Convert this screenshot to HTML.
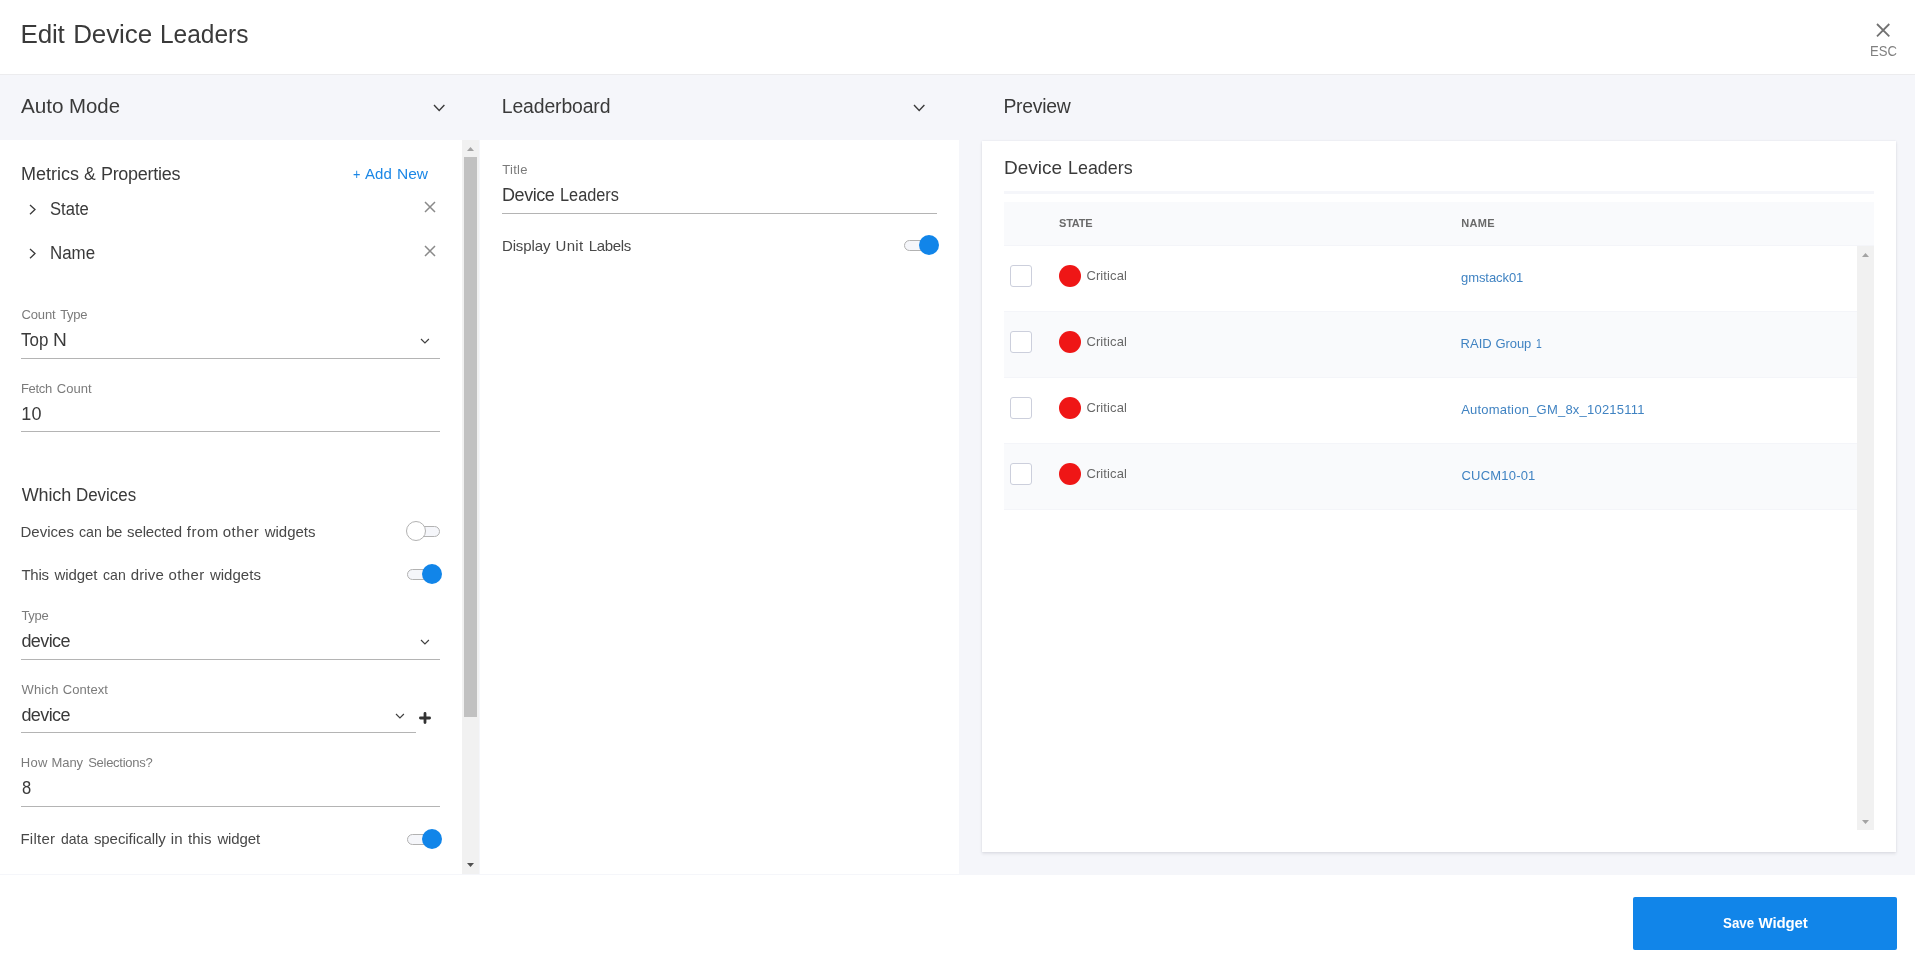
<!DOCTYPE html>
<html><head><meta charset="utf-8"><title>Edit Device Leaders</title>
<style>
*{box-sizing:border-box;margin:0;padding:0}
html,body{width:1915px;height:967px;overflow:hidden;background:#fff}
body{font-family:"Liberation Sans",sans-serif;position:relative}
#app{position:absolute;left:0;top:0;width:1915px;height:967px;will-change:transform}
.t{position:absolute;white-space:pre;display:block;transform-origin:0 50%}
.abs,.ic{position:absolute}
.ic{overflow:visible}
#hdr{position:absolute;left:0;top:0;width:1915px;height:74px;background:#fff}
#hline{position:absolute;left:0;top:74px;width:1915px;height:1px;background:#ececee}
#band{position:absolute;left:0;top:75px;width:1915px;height:800px;background:#f5f6fa}
#left{position:absolute;left:0;top:140px;width:462px;height:734px;background:#fff}
#lsb{position:absolute;left:462px;top:140px;width:17px;height:734px;background:#f1f1f1}
#lsb b{position:absolute;left:2px;top:17px;width:13px;height:560px;background:#c1c1c1}
#mid{position:absolute;left:480px;top:140px;width:479px;height:734px;background:#fff}
#card{position:absolute;left:982px;top:141px;width:914px;height:711px;background:#fff;box-shadow:0 2px 3px rgba(30,30,60,.09),0 0 2px rgba(30,30,60,.08)}
#foot{position:absolute;left:0;top:875px;width:1915px;height:92px;background:#fff}
.ul{position:absolute;height:1px;background:#b4b4b4}
.tg{position:absolute;width:33px;height:11px;border:1px solid #b2b2b2;border-radius:6px;background:#f5f6fa}
.tg i{position:absolute;left:-2px;top:-6px;width:20px;height:20px;border-radius:50%;background:#fff;border:1px solid #b2b2b2}
.tg.on i{left:14px;background:#1185e9;border:0}
#cdiv{position:absolute;left:1004px;top:191px;width:870px;height:3px;background:#f5f6fa}
#thead{position:absolute;left:1004px;top:202px;width:870px;height:44px;background:#f9fafc;border-bottom:1px solid #f4f5f9}
.row{position:absolute;left:1004px;width:853px;height:66px;border-top:1px solid #f4f5f9}
.row.alt{background:#f9fafc}
#rsb{position:absolute;left:1857px;top:246px;width:17px;height:584px;background:#f1f1f1}
.cb{position:absolute;left:1010px;width:22px;height:22px;border:1px solid #cccfdc;border-radius:3px;background:#fff}
.dot{position:absolute;left:1059px;width:22px;height:22px;border-radius:50%;background:#ef1616}
#save{position:absolute;left:1633px;top:897px;width:264px;height:53px;background:#1185e9;border-radius:2px}
</style></head>
<body>
<div id="app">
<div id="hdr"></div><div id="hline"></div><div id="band"></div>
<span class="t" style="left:20.60px;top:17.50px;font-size:26px;line-height:33px;color:#3a3a3a;letter-spacing:-0.226px">Edit</span>
<span class="t" style="left:73.20px;top:17.50px;font-size:26px;line-height:33px;color:#3a3a3a;letter-spacing:-0.103px">Device</span>
<span class="t" style="left:159.52px;top:17.50px;font-size:26px;line-height:33px;color:#3a3a3a;transform:scaleX(0.9417)">Leaders</span>
<span class="t" style="left:1869.53px;top:41.00px;font-size:15px;line-height:19px;color:#808080;transform:scaleX(0.8730)">ESC</span>
<svg class="ic" style="left:1874.75px;top:21.5px" width="16.3" height="16.3" viewBox="-2 -2 16.3 16.3"><path d="M0 0 L12.3 12.3 M12.3 0 L0 12.3" fill="none" stroke="#727272" stroke-width="1.8"/></svg>
<span class="t" style="left:21.30px;top:93.50px;font-size:19.4px;line-height:25px;color:#3a3a3a;transform:scaleX(1.0689)">Auto</span>
<span class="t" style="left:68.95px;top:93.50px;font-size:19.4px;line-height:25px;color:#3a3a3a;transform:scaleX(1.0509)">Mode</span>
<span class="t" style="left:501.80px;top:93.50px;font-size:19.4px;line-height:25px;color:#3a3a3a;letter-spacing:-0.129px">Leaderboard</span>
<span class="t" style="left:1003.40px;top:93.50px;font-size:19.4px;line-height:25px;color:#3a3a3a;letter-spacing:-0.260px">Preview</span>
<svg class="ic" style="left:431.8px;top:102.5px" width="14.4" height="9.4" viewBox="-2 -2 14.4 9.4"><path d="M0 0 L5.2 5.4 L10.4 0" fill="none" stroke="#3a3a3a" stroke-width="1.4" stroke-linecap="butt" stroke-linejoin="miter"/></svg>
<svg class="ic" style="left:911.8px;top:102.5px" width="14.4" height="9.4" viewBox="-2 -2 14.4 9.4"><path d="M0 0 L5.2 5.4 L10.4 0" fill="none" stroke="#3a3a3a" stroke-width="1.4" stroke-linecap="butt" stroke-linejoin="miter"/></svg>
<div id="left"></div><div id="lsb"><b></b></div>
<svg class="ic" style="left:467.0px;top:146.9px" width="7" height="4" viewBox="0 0 7 4"><polygon points="0,4 3.5,0 7,4" fill="#a3a3a3"/></svg>
<svg class="ic" style="left:467.0px;top:862.9px" width="7" height="4" viewBox="0 0 7 4"><polygon points="0,0 3.5,4 7,0" fill="#505050"/></svg>
<span class="t" style="left:21.00px;top:162.50px;font-size:18px;line-height:23px;color:#3a3a3a;letter-spacing:-0.017px">Metrics</span>
<span class="t" style="left:84.40px;top:162.50px;font-size:18px;line-height:23px;color:#3a3a3a;transform:scaleX(0.9750)">&amp;</span>
<span class="t" style="left:100.90px;top:162.50px;font-size:18px;line-height:23px;color:#3a3a3a;letter-spacing:-0.271px">Properties</span>
<span class="t" style="left:352.50px;top:164.00px;font-size:15px;line-height:19px;color:#1b87e6;transform:scaleX(0.8444)">+</span>
<span class="t" style="left:365.10px;top:164.00px;font-size:15px;line-height:19px;color:#1b87e6;letter-spacing:-0.024px">Add</span>
<span class="t" style="left:396.56px;top:164.00px;font-size:15px;line-height:19px;color:#1b87e6;transform:scaleX(1.0351)">New</span>
<span class="t" style="left:49.80px;top:197.50px;font-size:18px;line-height:23px;color:#3a3a3a;transform:scaleX(0.9234)">State</span>
<span class="t" style="left:49.56px;top:241.50px;font-size:18px;line-height:23px;color:#3a3a3a;transform:scaleX(0.9382)">Name</span>
<svg class="ic" style="left:27.799999999999997px;top:202.70000000000002px" width="9.0" height="13.2" viewBox="-2 -2 9.0 13.2"><path d="M0 0 L5.0 4.6 L0 9.2" fill="none" stroke="#3a3a3a" stroke-width="1.3"/></svg>
<svg class="ic" style="left:27.799999999999997px;top:246.8px" width="9.0" height="13.2" viewBox="-2 -2 9.0 13.2"><path d="M0 0 L5.0 4.6 L0 9.2" fill="none" stroke="#3a3a3a" stroke-width="1.3"/></svg>
<svg class="ic" style="left:423.0px;top:200.1px" width="14" height="14" viewBox="-2 -2 14 14"><path d="M0 0 L10 10 M10 0 L0 10" fill="none" stroke="#8a8a8a" stroke-width="1.5"/></svg>
<svg class="ic" style="left:423.0px;top:244.1px" width="14" height="14" viewBox="-2 -2 14 14"><path d="M0 0 L10 10 M10 0 L0 10" fill="none" stroke="#8a8a8a" stroke-width="1.5"/></svg>
<span class="t" style="left:21.40px;top:306.00px;font-size:13px;line-height:17px;color:#7b7b7b;letter-spacing:-0.120px">Count</span>
<span class="t" style="left:60.20px;top:306.00px;font-size:13px;line-height:17px;color:#7b7b7b;letter-spacing:-0.318px">Type</span>
<span class="t" style="left:21.20px;top:328.50px;font-size:18px;line-height:23px;color:#3a3a3a;transform:scaleX(0.9410)">Top</span>
<span class="t" style="left:53.24px;top:328.50px;font-size:18px;line-height:23px;color:#3a3a3a;transform:scaleX(1.0636)">N</span>
<span class="t" style="left:20.90px;top:380.00px;font-size:13px;line-height:17px;color:#7b7b7b;letter-spacing:-0.271px">Fetch</span>
<span class="t" style="left:56.80px;top:380.00px;font-size:13px;line-height:17px;color:#7b7b7b;letter-spacing:0.005px">Count</span>
<span class="t" style="left:21.20px;top:402.50px;font-size:18px;line-height:23px;color:#3a3a3a;letter-spacing:0.289px">10</span>
<span class="t" style="left:21.70px;top:483.50px;font-size:18px;line-height:23px;color:#3a3a3a;letter-spacing:-0.125px">Which</span>
<span class="t" style="left:76.26px;top:483.50px;font-size:18px;line-height:23px;color:#3a3a3a;transform:scaleX(0.9394)">Devices</span>
<span class="t" style="left:20.40px;top:522.00px;font-size:15px;line-height:19px;color:#484848;letter-spacing:0.042px">Devices</span>
<span class="t" style="left:78.50px;top:522.00px;font-size:15px;line-height:19px;color:#484848;transform:scaleX(0.9479)">can</span>
<span class="t" style="left:106.10px;top:522.00px;font-size:15px;line-height:19px;color:#484848;letter-spacing:-0.442px">be</span>
<span class="t" style="left:127.00px;top:522.00px;font-size:15px;line-height:19px;color:#484848;letter-spacing:-0.104px">selected</span>
<span class="t" style="left:186.80px;top:522.00px;font-size:15px;line-height:19px;color:#484848;letter-spacing:0.465px">from</span>
<span class="t" style="left:222.80px;top:522.00px;font-size:15px;line-height:19px;color:#484848;letter-spacing:0.426px">other</span>
<span class="t" style="left:264.70px;top:522.00px;font-size:15px;line-height:19px;color:#484848;letter-spacing:-0.010px">widgets</span>
<span class="t" style="left:21.40px;top:565.00px;font-size:15px;line-height:19px;color:#484848;letter-spacing:-0.246px">This</span>
<span class="t" style="left:54.50px;top:565.00px;font-size:15px;line-height:19px;color:#484848;letter-spacing:-0.078px">widget</span>
<span class="t" style="left:103.30px;top:565.00px;font-size:15px;line-height:19px;color:#484848;transform:scaleX(0.9395)">can</span>
<span class="t" style="left:130.70px;top:565.00px;font-size:15px;line-height:19px;color:#484848;letter-spacing:0.133px">drive</span>
<span class="t" style="left:168.40px;top:565.00px;font-size:15px;line-height:19px;color:#484848;letter-spacing:0.401px">other</span>
<span class="t" style="left:209.90px;top:565.00px;font-size:15px;line-height:19px;color:#484848;letter-spacing:0.023px">widgets</span>
<span class="t" style="left:21.40px;top:607.00px;font-size:13px;line-height:17px;color:#7b7b7b;letter-spacing:-0.285px">Type</span>
<span class="t" style="left:21.40px;top:629.50px;font-size:18px;line-height:23px;color:#3a3a3a;letter-spacing:-0.584px">device</span>
<span class="t" style="left:21.40px;top:681.00px;font-size:13px;line-height:17px;color:#7b7b7b;letter-spacing:0.228px">Which</span>
<span class="t" style="left:62.70px;top:681.00px;font-size:13px;line-height:17px;color:#7b7b7b;letter-spacing:0.068px">Context</span>
<span class="t" style="left:21.40px;top:703.50px;font-size:18px;line-height:23px;color:#3a3a3a;letter-spacing:-0.584px">device</span>
<span class="t" style="left:20.80px;top:754.00px;font-size:13px;line-height:17px;color:#7b7b7b;letter-spacing:0.341px">How</span>
<span class="t" style="left:51.60px;top:754.00px;font-size:13px;line-height:17px;color:#7b7b7b;letter-spacing:-0.096px">Many</span>
<span class="t" style="left:88.20px;top:754.00px;font-size:13px;line-height:17px;color:#7b7b7b;letter-spacing:-0.278px">Selections?</span>
<span class="t" style="left:21.70px;top:776.50px;font-size:18px;line-height:23px;color:#3a3a3a;transform:scaleX(0.9200)">8</span>
<span class="t" style="left:20.40px;top:829.00px;font-size:15px;line-height:19px;color:#484848;letter-spacing:0.273px">Filter</span>
<span class="t" style="left:60.70px;top:829.00px;font-size:15px;line-height:19px;color:#484848;transform:scaleX(0.9346)">data</span>
<span class="t" style="left:93.90px;top:829.00px;font-size:15px;line-height:19px;color:#484848;letter-spacing:-0.057px">specifically</span>
<span class="t" style="left:170.80px;top:829.00px;font-size:15px;line-height:19px;color:#484848;letter-spacing:0.067px">in</span>
<span class="t" style="left:188.00px;top:829.00px;font-size:15px;line-height:19px;color:#484848;letter-spacing:0.019px">this</span>
<span class="t" style="left:217.40px;top:829.00px;font-size:15px;line-height:19px;color:#484848;letter-spacing:-0.118px">widget</span>
<svg class="ic" style="left:418.75px;top:337.2px" width="11.9" height="8.0" viewBox="-2 -2 11.9 8.0"><path d="M0 0 L3.95 4.0 L7.9 0" fill="none" stroke="#404040" stroke-width="1.15" stroke-linecap="butt" stroke-linejoin="miter"/></svg>
<svg class="ic" style="left:418.75px;top:638.2px" width="11.9" height="8.0" viewBox="-2 -2 11.9 8.0"><path d="M0 0 L3.95 4.0 L7.9 0" fill="none" stroke="#404040" stroke-width="1.15" stroke-linecap="butt" stroke-linejoin="miter"/></svg>
<svg class="ic" style="left:394.35px;top:711.9px" width="11.9" height="8.0" viewBox="-2 -2 11.9 8.0"><path d="M0 0 L3.95 4.0 L7.9 0" fill="none" stroke="#404040" stroke-width="1.15" stroke-linecap="butt" stroke-linejoin="miter"/></svg>
<div class="ul" style="left:21px;top:358px;width:419px"></div>
<div class="ul" style="left:21px;top:431px;width:419px"></div>
<div class="ul" style="left:21px;top:659px;width:419px"></div>
<div class="ul" style="left:21px;top:732px;width:395px"></div>
<div class="ul" style="left:21px;top:806px;width:419px"></div>
<svg class="ic" style="left:419px;top:712px" width="12" height="12" viewBox="0 0 12 12"><path d="M6 1.4V10.6M1.4 6H10.6" stroke="#333" stroke-width="2.8" stroke-linecap="round" fill="none"/></svg>
<div class="tg" style="left:407px;top:526px"><i></i></div>
<div class="tg on" style="left:407px;top:569px"><i></i></div>
<div class="tg on" style="left:407px;top:834px"><i></i></div>
<div id="mid"></div>
<span class="t" style="left:502.20px;top:161.00px;font-size:13px;line-height:17px;color:#7b7b7b;letter-spacing:0.313px">Title</span>
<span class="t" style="left:502.00px;top:183.50px;font-size:18px;line-height:23px;color:#3a3a3a;letter-spacing:-0.442px">Device</span>
<span class="t" style="left:560.09px;top:183.50px;font-size:18px;line-height:23px;color:#3a3a3a;transform:scaleX(0.9056)">Leaders</span>
<span class="t" style="left:501.90px;top:236.00px;font-size:15px;line-height:19px;color:#484848;letter-spacing:-0.097px">Display</span>
<span class="t" style="left:555.50px;top:236.00px;font-size:15px;line-height:19px;color:#484848;letter-spacing:0.298px">Unit</span>
<span class="t" style="left:588.80px;top:236.00px;font-size:15px;line-height:19px;color:#484848;letter-spacing:-0.360px">Labels</span>
<div class="ul" style="left:502px;top:213px;width:435px"></div>
<div class="tg on" style="left:904px;top:240px"><i></i></div>
<div id="card"></div>
<span class="t" style="left:1004.10px;top:155.50px;font-size:19px;line-height:24px;color:#3a3a3a;letter-spacing:-0.022px">Device</span>
<span class="t" style="left:1067.56px;top:155.50px;font-size:19px;line-height:24px;color:#3a3a3a;transform:scaleX(0.9410)">Leaders</span>
<div id="cdiv"></div><div id="thead"></div>
<span class="t" style="left:1059.10px;top:216.00px;font-size:11px;line-height:14px;color:#6a6a6a;font-weight:700;letter-spacing:-0.247px">STATE</span>
<span class="t" style="left:1461.30px;top:216.00px;font-size:11px;line-height:14px;color:#6a6a6a;font-weight:700;letter-spacing:0.283px">NAME</span>
<div class="row" style="top:246px;height:65px;border-top:0"></div>
<div class="cb" style="top:265px"></div><div class="dot" style="top:265px"></div>
<div class="row alt" style="top:311px"></div>
<div class="cb" style="top:331px"></div><div class="dot" style="top:331px"></div>
<div class="row" style="top:377px"></div>
<div class="cb" style="top:397px"></div><div class="dot" style="top:397px"></div>
<div class="row alt" style="top:443px"></div>
<div class="cb" style="top:463px"></div><div class="dot" style="top:463px"></div>
<div class="row" style="top:509px;height:1px"></div>
<span class="t" style="left:1086.40px;top:267.00px;font-size:13px;line-height:17px;color:#686868;letter-spacing:0.124px">Critical</span>
<span class="t" style="left:1086.40px;top:333.00px;font-size:13px;line-height:17px;color:#686868;letter-spacing:0.124px">Critical</span>
<span class="t" style="left:1086.40px;top:399.00px;font-size:13px;line-height:17px;color:#686868;letter-spacing:0.124px">Critical</span>
<span class="t" style="left:1086.40px;top:465.00px;font-size:13px;line-height:17px;color:#686868;letter-spacing:0.124px">Critical</span>
<span class="t" style="left:1461.00px;top:269.00px;font-size:13px;line-height:17px;color:#4083c2;letter-spacing:-0.066px">gmstack01</span>
<span class="t" style="left:1460.50px;top:335.00px;font-size:13px;line-height:17px;color:#4083c2;letter-spacing:0.043px">RAID</span>
<span class="t" style="left:1495.60px;top:335.00px;font-size:13px;line-height:17px;color:#4083c2;letter-spacing:-0.125px">Group</span>
<span class="t" style="left:1536.00px;top:335.00px;font-size:13px;line-height:17px;color:#4083c2;transform:scaleX(0.8000)">1</span>
<span class="t" style="left:1461.20px;top:401.00px;font-size:13px;line-height:17px;color:#4083c2;letter-spacing:0.217px">Automation_GM_8x_10215111</span>
<span class="t" style="left:1461.50px;top:467.00px;font-size:13px;line-height:17px;color:#4083c2;letter-spacing:0.198px">CUCM10-01</span>
<div id="rsb"></div>
<svg class="ic" style="left:1862.0px;top:252.9px" width="7" height="4" viewBox="0 0 7 4"><polygon points="0,4 3.5,0 7,4" fill="#a3a3a3"/></svg>
<svg class="ic" style="left:1862.0px;top:820.0px" width="7" height="4" viewBox="0 0 7 4"><polygon points="0,0 3.5,4 7,0" fill="#a3a3a3"/></svg>
<div id="foot"></div><div id="save"></div>
<span class="t" style="left:1722.60px;top:913.00px;font-size:15px;line-height:19px;color:#ffffff;font-weight:700;transform:scaleX(0.8879)">Save</span>
<span class="t" style="left:1758.50px;top:913.00px;font-size:15px;line-height:19px;color:#ffffff;font-weight:700;letter-spacing:-0.112px">Widget</span>
</div>
</body></html>
